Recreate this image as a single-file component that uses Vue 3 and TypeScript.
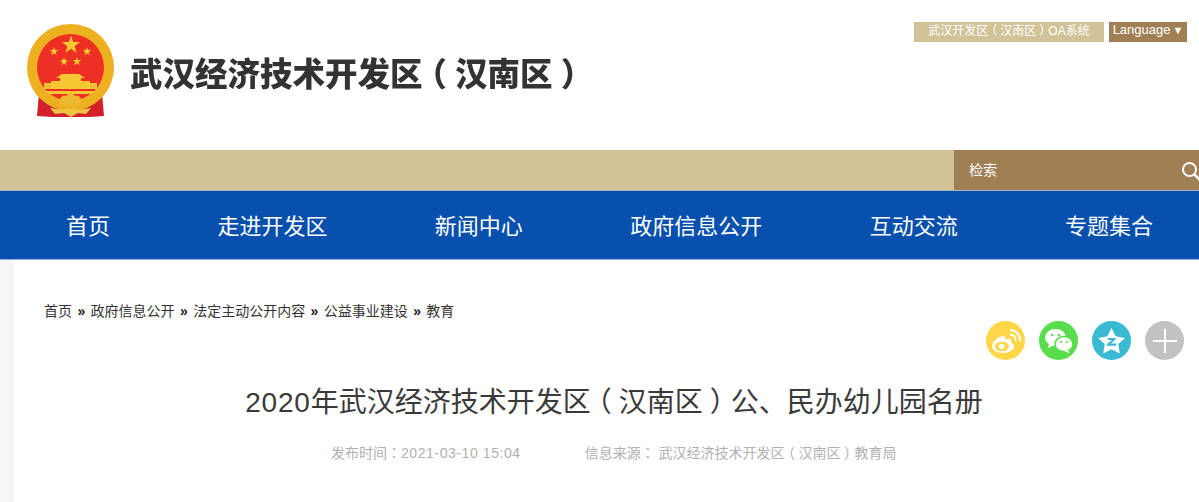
<template>
  <div class="page">
    <header class="top">
      <div class="brand">
        <svg class="emblem" width="90" height="96" viewBox="0 0 90 96">
          <path d="M26 66 L13 71 L11 94 L26 95 L34 88 Z" fill="#d3202a" />
          <path d="M63 66 L76 71 L78 94 L63 95 L55 88 Z" fill="#d3202a" />
          <path d="M30 88 L59 88 L64 95 L25 95 Z" fill="#d3202a" />
          <circle cx="44.500" cy="45.500" r="43.500" fill="#ecb021" />
          <circle cx="44.500" cy="45.500" r="33.500" fill="#ee2f24" />
          <polygon :points="star(45, 23, 9.500)" fill="#f6c832" />
          <polygon :points="star(28, 29.500, 4.500)" fill="#f6c832" />
          <polygon :points="star(61, 29.500, 4.500)" fill="#f6c832" />
          <polygon :points="star(38, 39.500, 4.500)" fill="#f6c832" />
          <polygon :points="star(51, 39.500, 4.500)" fill="#f6c832" />
          <path d="M36 52 H53 L59 56 H55 V59 H64 V67 H25 V59 H34 V56 H30 Z" fill="#f6c832" />
          <path d="M18 61 H25 V67 H18 Z M64 61 H71 V67 H64 Z" fill="#f0bf3a" />
          <path d="M20 69 H69 V72 H20 Z" fill="#f6c832" />
          <path d="M11 68 L16 66 Q44 92 73 66 L78 68 Q45 104 11 68 Z" fill="#ecb021" />
          <path d="M33 79 Q36 72 40 74 Q45 68 49 74 Q53 72 56 79 L52 84 H37 Z" fill="#eeb92f" />
          <path d="M24 86 L38 88 Q42 84 45 88 Q48 84 51 88 L65 86 L60 92 L52 91 L45 95 L38 91 L29 92 Z" fill="#f2c341" />
        </svg>
        <div class="site-name">武汉经济技术开发区<span class="paren">（</span>汉南区<span class="paren">）</span></div>
      </div>
      <div class="top-links">
        <a class="oa">武汉开发区<span class="paren">（</span>汉南区<span class="paren">）</span>OA系统</a>
        <a class="lang">Language<span class="arrow">▼</span></a>
      </div>
    </header>

    <div class="search-bar">
      <div class="search">
        <span class="search-label">检索</span>
        <svg class="search-icon" width="20" height="20" viewBox="0 0 20 20">
          <circle cx="8.500" cy="8.500" r="6.500" fill="none" stroke="#fff" stroke-width="2" />
          <path d="M13.500 13.500 L19 19" stroke="#fff" stroke-width="2.500" />
        </svg>
      </div>
    </div>

    <nav class="nav">
      <a v-for="item in navItems" :key="item">{{ item }}</a>
    </nav>

    <main class="content">
      <div class="crumbs">
        <template v-for="(c, i) in crumbs" :key="c">
          <span v-if="i > 0" class="sep">»</span>
          <a>{{ c }}</a>
        </template>
      </div>

      <div class="share">
        <span class="circle weibo">
          <svg width="30" height="26" viewBox="0 0 30 26">
            <path d="M12 8 C6 9 1 14 1 18 C1 22 6 25 12 25 C18 25 23 22 23 18 C23 15 20 15 20 14 C21 11 19 10 16 11 C14 12 13.500 11 14 9.500 C14.200 8 13 7.800 12 8 Z" fill="#fff" />
            <ellipse cx="11" cy="18.500" rx="7" ry="4.800" fill="#ffd648" />
            <circle cx="10.500" cy="18.500" r="2.800" fill="#fff" />
            <path d="M19 6.500 A5.500 5.500 0 0 1 24.500 13" fill="none" stroke="#fff" stroke-width="2" />
            <path d="M19 2 A10 10 0 0 1 29 13" fill="none" stroke="#fff" stroke-width="2" />
          </svg>
        </span>
        <span class="circle wechat">
          <svg width="30" height="26" viewBox="0 0 30 26">
            <ellipse cx="11.500" cy="9.500" rx="10.500" ry="8.500" fill="#fff" />
            <path d="M5 15 L4 20 L10 17 Z" fill="#fff" />
            <ellipse cx="20" cy="16" rx="9" ry="7.500" stroke="#59dd4c" stroke-width="1.500" fill="#fff" />
            <path d="M24 22 L26 25.500 L20 23 Z" fill="#fff" />
            <circle cx="8" cy="7" r="1.300" fill="#59dd4c" />
            <circle cx="15" cy="7" r="1.300" fill="#59dd4c" />
            <circle cx="17" cy="14" r="1.100" fill="#59dd4c" />
            <circle cx="23" cy="14" r="1.100" fill="#59dd4c" />
          </svg>
        </span>
        <span class="circle qzone">
          <svg width="27" height="26" viewBox="0 0 26 25">
            <polygon points="13,0 17,8 26,9.500 19.500,15.500 21,24.500 13,20.500 5,24.500 6.500,15.500 0,9.500 9,8" fill="#fff" />
            <path d="M9.500 9.500 H17 V11 L12.500 15 H17.500 V17 H8.500 V15.500 L13.500 11.500 H9.500 Z" fill="#3ab9d3" />
          </svg>
        </span>
        <span class="circle more">
          <svg width="26" height="26" viewBox="0 0 26 26">
            <path d="M13 1 V25 M1 13 H25" stroke="#fff" stroke-width="2" />
          </svg>
        </span>
      </div>

      <h1 class="title"><span class="year">2020</span>年武汉经济技术开发区<span class="paren">（</span>汉南区<span class="paren">）</span>公、民办幼儿园名册</h1>
      <div class="meta">
        <span>发布时间<span class="colon">：</span><span class="date">2021-03-10 15:04</span></span>
        <span>信息来源<span class="colon">：</span> 武汉经济技术开发区<span class="paren">（</span>汉南区<span class="paren">）</span>教育局</span>
      </div>
    </main>
  </div>
</template>

<script setup lang="ts">
const navItems: string[] = ["首页", "走进开发区", "新闻中心", "政府信息公开", "互动交流", "专题集合"];
const crumbs: string[] = ["首页", "政府信息公开", "法定主动公开内容", "公益事业建设", "教育"];

// five pointed star for the emblem
const star = (cx: number, cy: number, r: number): string => {
  const pts: string[] = [];
  for (let i = 0; i < 10; i++) {
    const rad = i % 2 === 0 ? r : r * 0.4;
    const a = (Math.PI / 5) * i - Math.PI / 2;
    pts.push(`${(cx + rad * Math.cos(a)).toFixed(2)},${(cy + rad * Math.sin(a)).toFixed(2)}`);
  }
  return pts.join(" ");
};
</script>

<style>
html,
body {
  margin: 0;
  overflow: hidden;
  background: #f6f6f6;
}
</style>

<style scoped>
.page {
  height: 502px;
  overflow: hidden;
  font-family: "Liberation Sans", "Noto Sans CJK SC", sans-serif;
  background: #f6f6f6;
}

/* centred fullwidth punctuation, as in the original */
.colon {
  font-family: "Noto Sans CJK TC", sans-serif;
}

.paren {
  font-feature-settings: "halt";
  padding: 0 0.25em;
}

.top {
  height: 150px;
  background: #fff;
  display: flex;
  justify-content: space-between;
  align-items: flex-start;
  padding: 22px 12px 0 26px;
  box-sizing: border-box;
}

.brand {
  display: flex;
  align-items: center;
  gap: 14px;
  height: 96px;
}

.emblem {
  display: block;
  filter: blur(0.300px);
}

.site-name {
  font-size: 32.500px;
  font-weight: 900;
  color: #333;
  width: 476px;
  white-space: nowrap;
  margin-top: 3px;
  filter: blur(0.300px);
}

.top-links {
  display: flex;
  gap: 5px;
}

.oa,
.lang {
  height: 20px;
  color: #fff;
  text-align: center;
}

.oa {
  width: 190px;
  background: #d1c297;
  font-size: 12px;
  line-height: 18px;
}

.lang {
  width: 78px;
  background: #a17f55;
  font-size: 13px;
  line-height: 16px;
}

.arrow {
  font-size: 11px;
  margin-left: 2px;
}

.search-bar {
  height: 40px;
  background: #d1c297;
  border-bottom: 1px solid #a8b4c0;
  display: flex;
  justify-content: flex-end;
}

.search {
  width: 245px;
  height: 40px;
  background: #a17f55;
  color: #fff;
  font-size: 14px;
  display: flex;
  align-items: center;
  justify-content: space-between;
  padding-left: 15px;
  box-sizing: border-box;
}

.search-label {
  margin-bottom: 2px;
}

.search-icon {
  margin-right: -2px;
  margin-top: 1px;
}

.nav {
  height: 66px;
  background: #0750ad;
  display: flex;
  align-items: center;
  gap: 107.400px;
  padding: 0 0 2px 66px;
  border-bottom: 1px solid #8fb2e0;
}

.nav a {
  color: #fff;
  font-size: 22px;
  white-space: nowrap;
}

.content {
  position: relative;
  margin-left: 14px;
  height: 242px;
  background: #fff;
  padding-top: 41px;
  box-sizing: border-box;
}

.crumbs {
  margin-left: 30px;
  height: 20px;
  line-height: 20px;
  font-size: 14px;
  color: #333;
  display: flex;
  align-items: center;
}

.sep {
  color: #222;
  font-weight: 700;
  margin: 0 5.400px;
  font-size: 14px;
}

.share {
  position: absolute;
  top: 61px;
  right: 15px;
  display: flex;
  gap: 14px;
}

.circle {
  width: 39px;
  height: 39px;
  border-radius: 50%;
  display: flex;
  align-items: center;
  justify-content: center;
}

.weibo {
  background: #ffd648;
}

.wechat {
  background: #59dd4c;
}

.qzone {
  background: #3ab9d3;
}

.more {
  background: #c2c2c2;
}

.title {
  margin: 62px 0 0;
  padding-left: 30px;
  box-sizing: border-box;
  font-size: 28px;
  font-weight: 400;
  line-height: 40px;
  color: #3a3a3a;
  text-align: center;
  white-space: nowrap;
  width: 1170px;
}

.year {
  letter-spacing: 0.800px;
}

.meta {
  margin-top: 19px;
  padding-left: 317px;
  display: flex;
  gap: 64px;
  font-size: 14px;
  line-height: 20px;
  color: #b0b0b0;
  white-space: nowrap;
}

.date {
  letter-spacing: 0.570px;
}
</style>
